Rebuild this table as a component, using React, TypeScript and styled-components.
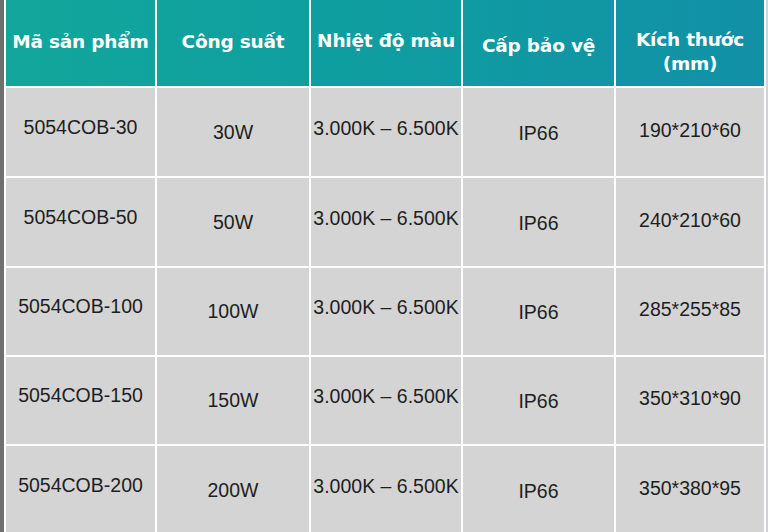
import React from 'react';
import styled, { createGlobalStyle } from 'styled-components';

const GlobalStyle = createGlobalStyle`
  html, body {
    margin: 0;
    padding: 0;
    width: 768px;
    height: 532px;
    overflow: hidden;
    background: #ffffff;
  }
`;

const Frame = styled.div`
  width: 768px;
  height: 532px;
  box-sizing: border-box;
  overflow: hidden;
  border-left: 4px solid #6f6f6f;
  border-right: 2px solid #cfd6d8;
  background: #ffffff;
  padding: 0 2px;
`;

const Table = styled.div`
  display: grid;
  grid-template-columns: 149px 152px 150px 151px 148px;
  grid-template-rows: 86px 88px 88px 87px 87px 88px;
  gap: 2px;
  background: #ffffff;
`;

// $shift moves the text centre down (positive) or up (negative) by that many px
const offset = (shift = 0) =>
  shift >= 0 ? `padding-top: ${shift * 2}px;` : `padding-bottom: ${-shift * 2}px;`;

const HeadCell = styled.div<{ $shift?: number }>`
  display: flex;
  align-items: center;
  justify-content: center;
  text-align: center;
  ${p => offset(p.$shift)}
  box-sizing: border-box;
  background: linear-gradient(90deg, #12a69b 0%, #0f9da0 50%, #1290a7 100%);
  background-attachment: fixed;
  color: #ffffff;
  font-family: 'DejaVu Sans', 'Liberation Sans', sans-serif;
  font-weight: bold;
  font-size: 18.5px;
  line-height: 24px;
  letter-spacing: -0.2px;
`;

const Cell = styled.div<{ $shift?: number }>`
  display: flex;
  align-items: center;
  justify-content: center;
  ${p => offset(p.$shift)}
  box-sizing: border-box;
  background: #d4d4d4;
  color: #1e1e1e;
  font-family: 'Liberation Sans', 'DejaVu Sans', sans-serif;
  font-size: 19.5px;
  white-space: nowrap;
`;

const headers: { label: React.ReactNode; shift: number }[] = [
  { label: 'Mã sản phẩm', shift: -1 },
  { label: 'Công suất', shift: -1 },
  { label: 'Nhiệt độ màu', shift: -2 },
  { label: 'Cấp bảo vệ', shift: 3 },
  { label: <>Kích thước<br />(mm)</>, shift: 9 },
];

const rows = [
  ['5054COB-30', '30W', '190*210*60'],
  ['5054COB-50', '50W', '240*210*60'],
  ['5054COB-100', '100W', '285*255*85'],
  ['5054COB-150', '150W', '350*310*90'],
  ['5054COB-200', '200W', '350*380*95'],
];

const App: React.FC = () => {
  return (
    <>
      <GlobalStyle />
      <Frame>
        <Table>
          {headers.map((h, i) => (
            <HeadCell key={i} $shift={h.shift}>{h.label}</HeadCell>
          ))}
          {rows.map(([code, power, size]) => (
            <React.Fragment key={code}>
              <Cell $shift={-5}>{code}</Cell>
              <Cell $shift={0}>{power}</Cell>
              <Cell $shift={-4}>3.000K – 6.500K</Cell>
              <Cell $shift={1}>IP66</Cell>
              <Cell $shift={-2}>{size}</Cell>
            </React.Fragment>
          ))}
        </Table>
      </Frame>
    </>
  );
};

export default App;
